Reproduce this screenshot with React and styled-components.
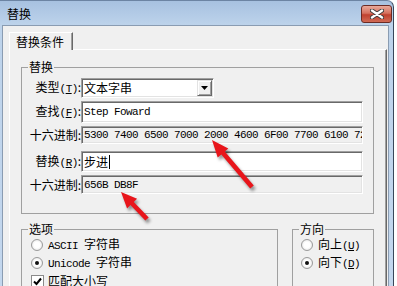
import React from "react";
import styled, { createGlobalStyle } from "styled-components";

const GlobalStyle = createGlobalStyle`
  html, body { margin: 0; padding: 0; background: #fff; }
  body {
    font-family: "Noto Sans CJK SC", "Liberation Sans", sans-serif;
    font-size: 12px;
    line-height: 14px;
    color: #000;
  }
`;

const Screen = styled.div`
  position: relative;
  width: 397px;
  height: 286px;
  overflow: hidden;
`;

const Frame = styled.div`
  width: 394px;
  height: 286px;
  box-sizing: border-box;
  display: flex;
  flex-direction: column;
  padding: 0 4px 0 2px;
  border-top: 1px solid #6c84a3;
  border-right: 1px solid #38475a;
  border-top-right-radius: 7px;
  background: linear-gradient(#a7c1e0 0, #bdd3eb 24px, #c3d7ee 100%);
`;

const TitleBar = styled.div`
  height: 24px;
  flex: none;
  display: flex;
  align-items: flex-start;
  justify-content: space-between;
  padding-left: 5px;
`;

const Title = styled.span`
  margin-top: 6px;
`;

const CloseButton = styled.div`
  margin-top: 4px;
  margin-right: -3px;
  width: 31px;
  height: 18px;
  box-sizing: border-box;
  border: 1px solid #6b2b24;
  border-radius: 3px;
  background: linear-gradient(#e9a99a 0, #d5715f 45%, #c0412f 55%, #d06a55 100%);
  display: flex;
  align-items: center;
  justify-content: center;
`;

const Client = styled.div`
  flex: 1;
  display: flex;
  flex-direction: column;
  border: 1px solid #8a9cb2;
  border-bottom: none;
  background: #f0f0f0;
  padding: 6px 1px 0 6px;
`;

const TabStrip = styled.div`
  display: flex;
`;

const Tab = styled.div`
  position: relative;
  z-index: 1;
  height: 18px;
  margin-bottom: -1px;
  box-sizing: border-box;
  padding: 0 8px 0 6px;
  display: flex;
  align-items: center;
  background: #f0f0f0;
  border-top: 1px solid #fff;
  border-left: 1px solid #fff;
  border-right: 1px solid #696969;
  box-shadow: inset -1px 0 #a0a0a0;
`;

const Panel = styled.div`
  flex: 1;
  display: flex;
  flex-direction: column;
  gap: 8px;
  border-top: 1px solid #fff;
  border-left: 1px solid #fff;
  border-right: 1px solid #696969;
  box-shadow: inset -1px 0 #a0a0a0;
  padding: 10px 0 0 11px;
`;

const Group = styled.fieldset`
  margin: 0;
  padding: 0;
  min-width: 0;
  width: ${(p) => p.$w}px;
  box-sizing: border-box;
  border: 1px solid #a0a0a0;
`;

const Legend = styled.legend`
  margin-left: 6px;
  padding: 0 1px;
  line-height: 14px;
`;

const Form = styled.div`
  display: flex;
  flex-direction: column;
  padding: 4px 0 19px 0;
`;

const Row = styled.div`
  display: grid;
  grid-template-columns: 59px auto;
  align-items: center;
  height: ${(p) => p.$h}px;
  margin-top: ${(p) => p.$mt || 0}px;
`;

const Label = styled.span`
  text-align: right;
  white-space: nowrap;
`;

const Mono = styled.span`
  font-family: "Liberation Mono", "DejaVu Sans Mono", monospace;
  font-size: 11px;
  letter-spacing: -0.6px;
`;

const Field = styled.div`
  height: 100%;
  width: ${(p) => p.$w || 282}px;
  box-sizing: border-box;
  display: flex;
  align-items: center;
  justify-content: space-between;
  padding: 0 1px 0 2px;
  overflow: hidden;
  white-space: nowrap;
  background: ${(p) => (p.$readOnly ? "#f0f0f0" : "#fff")};
  border: 1px solid;
  border-color: #a0a0a0 #fff #fff #a0a0a0;
  box-shadow: inset 1px 1px #696969, inset -1px -1px #e3e3e3;
`;

const FieldText = styled.span`
  display: flex;
  align-items: center;
  flex: 1;
  min-width: 0;
`;

const Caret = styled.span`
  width: 1px;
  height: 14px;
  background: #000;
  margin-left: 1px;
`;

const DropButton = styled.div`
  flex: none;
  width: 15px;
  height: 16px;
  box-sizing: border-box;
  display: flex;
  align-items: center;
  justify-content: center;
  background: #f0f0f0;
  border: 1px solid;
  border-color: #e3e3e3 #696969 #696969 #e3e3e3;
  box-shadow: inset 1px 1px #fff, inset -1px -1px #a0a0a0;
`;

const LowerRow = styled.div`
  display: flex;
  gap: 14px;
  align-items: flex-start;
`;

const OptionList = styled.div`
  display: flex;
  flex-direction: column;
  padding: 0 0 10px ${(p) => p.$pl}px;
`;

const Option = styled.div`
  height: 18px;
  display: flex;
  align-items: center;
  gap: 5px;
  white-space: nowrap;
`;

const Radio = styled.span`
  flex: none;
  width: 12px;
  height: 12px;
  box-sizing: border-box;
  border-radius: 50%;
  border: 1px solid #9a9a9a;
  background: radial-gradient(circle, #fff 0, #fff 40%, #dcdcdc 100%);
  display: flex;
  align-items: center;
  justify-content: center;
  &::after {
    content: "";
    width: 4px;
    height: 4px;
    border-radius: 50%;
    background: ${(p) => (p.$on ? "#111" : "transparent")};
  }
`;

const CheckBox = styled.span`
  flex: none;
  width: 13px;
  height: 13px;
  margin-right: -1px;
  box-sizing: border-box;
  background: #fff;
  border: 1px solid #8a8a8a;
  display: flex;
  align-items: center;
  justify-content: center;
`;

const Overlay = styled.svg`
  position: absolute;
  left: 0;
  top: 0;
  width: 397px;
  height: 286px;
  pointer-events: none;
  filter: drop-shadow(2px 3px 1.5px rgba(0, 0, 0, 0.4));
`;

function arrowPoints(x1, y1, x2, y2, s = 2.3, headLen = 17, h = 7) {
  const dx = x2 - x1;
  const dy = y2 - y1;
  const len = Math.hypot(dx, dy);
  const ux = dx / len;
  const uy = dy / len;
  const nx = -uy;
  const ny = ux;
  const bx = x2 - ux * headLen;
  const by = y2 - uy * headLen;
  return [
    [x1 + nx * s, y1 + ny * s],
    [bx + nx * s, by + ny * s],
    [bx + nx * h, by + ny * h],
    [x2, y2],
    [bx - nx * h, by - ny * h],
    [bx - nx * s, by - ny * s],
    [x1 - nx * s, y1 - ny * s],
  ]
    .map((p) => p.map((v) => v.toFixed(1)).join(","))
    .join(" ");
}

const Key = ({ k }) => (
  <Mono>
    (<u>{k}</u>)
  </Mono>
);

export default function App() {
  return (
    <Screen>
      <GlobalStyle />
      <Frame>
        <TitleBar>
          <Title>替换</Title>
          <CloseButton>
            <svg width="14" height="10" viewBox="0 0 14 10">
              <path d="M2 1.5 L12 8.5 M12 1.5 L2 8.5" stroke="#3b3b3b" strokeWidth="4.2" strokeLinecap="round" />
              <path d="M2 1.5 L12 8.5 M12 1.5 L2 8.5" stroke="#fff" strokeWidth="2.4" strokeLinecap="round" />
            </svg>
          </CloseButton>
        </TitleBar>
        <Client>
          <TabStrip>
            <Tab>替换条件</Tab>
          </TabStrip>
          <Panel>
            <Group $w={353}>
              <Legend>替换</Legend>
              <Form>
                <Row $h={20}>
                  <Label>
                    类型<Key k="T" />:
                  </Label>
                  <Field $w={133}>
                    <FieldText>文本字串</FieldText>
                    <DropButton>
                      <svg width="7" height="4" viewBox="0 0 7 4">
                        <polygon points="0,0 7,0 3.5,4" fill="#000" />
                      </svg>
                    </DropButton>
                  </Field>
                </Row>
                <Row $h={22} $mt={3}>
                  <Label>
                    查找<Key k="F" />:
                  </Label>
                  <Field>
                    <FieldText>
                      <Mono>Step Foward</Mono>
                    </FieldText>
                  </Field>
                </Row>
                <Row $h={18} $mt={3}>
                  <Label>十六进制:</Label>
                  <Field $readOnly>
                    <FieldText>
                      <Mono>5300 7400 6500 7000 2000 4600 6F00 7700 6100 7200 6400</Mono>
                    </FieldText>
                  </Field>
                </Row>
                <Row $h={21} $mt={7}>
                  <Label>
                    替换<Key k="R" />:
                  </Label>
                  <Field>
                    <FieldText>
                      步进
                      <Caret />
                    </FieldText>
                  </Field>
                </Row>
                <Row $h={19} $mt={3}>
                  <Label>十六进制:</Label>
                  <Field $readOnly>
                    <FieldText>
                      <Mono>656B DB8F</Mono>
                    </FieldText>
                  </Field>
                </Row>
              </Form>
            </Group>
            <LowerRow>
              <Group $w={257}>
                <Legend>选项</Legend>
                <OptionList $pl={9}>
                  <Option>
                    <Radio />
                    <span>
                      <Mono>ASCII </Mono>字符串
                    </span>
                  </Option>
                  <Option>
                    <Radio $on />
                    <span>
                      <Mono>Unicode </Mono>字符串
                    </span>
                  </Option>
                  <Option>
                    <CheckBox>
                      <svg width="9" height="9" viewBox="0 0 9 9">
                        <path d="M1 4.5 L3.5 7 L8 1.5" fill="none" stroke="#000" strokeWidth="2" />
                      </svg>
                    </CheckBox>
                    <span>匹配大小写</span>
                  </Option>
                </OptionList>
              </Group>
              <Group $w={82}>
                <Legend>方向</Legend>
                <OptionList $pl={8}>
                  <Option>
                    <Radio />
                    <span>
                      向上<Key k="U" />
                    </span>
                  </Option>
                  <Option>
                    <Radio $on />
                    <span>
                      向下<Key k="D" />
                    </span>
                  </Option>
                  <Option />
                </OptionList>
              </Group>
            </LowerRow>
          </Panel>
        </Client>
      </Frame>
      <Overlay viewBox="0 0 397 286">
        <polygon points={arrowPoints(252, 187, 212, 140)} fill="#e8151b" />
        <polygon points={arrowPoints(147, 219, 121, 192, 2.3, 16, 7)} fill="#e8151b" />
      </Overlay>
    </Screen>
  );
}
